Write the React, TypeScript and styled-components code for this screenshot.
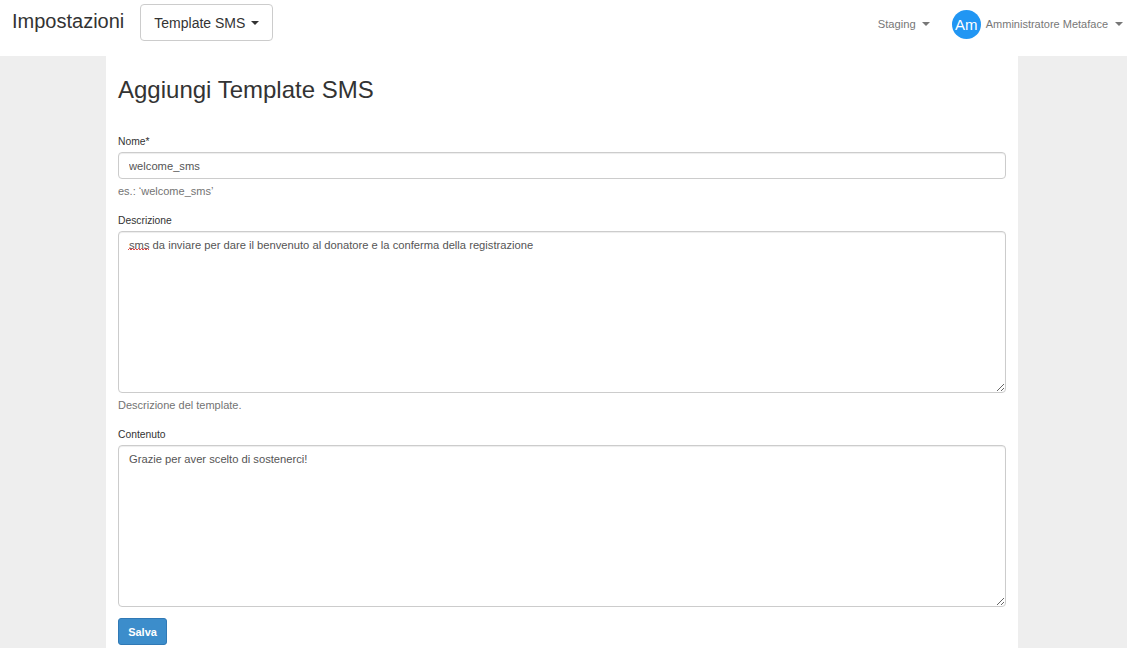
import React from "react";
import styled, { createGlobalStyle } from "styled-components";

const Global = createGlobalStyle`
  html, body { margin: 0; padding: 0; background: #eeeeee; }
  body { font-family: "Liberation Sans", Arial, sans-serif; color: #333; }
  * { box-sizing: border-box; }
`;

const Header = styled.header`
  height: 56px;
  background: #fff;
  display: flex;
  align-items: flex-start;
  justify-content: space-between;
`;

const Left = styled.div`
  display: flex;
  align-items: flex-start;
`;

const Brand = styled.div`
  font-size: 20px;
  color: #333;
  padding: 9px 16px 0 12px;
  line-height: 24px;
`;

const DropButton = styled.button`
  margin-top: 4px;
  height: 37px;
  padding: 0 13px;
  background: #fff;
  border: 1px solid #ccc;
  border-radius: 4px;
  font-family: inherit;
  font-size: 14px;
  color: #333;
  display: flex;
  align-items: center;
  gap: 4px;
`;

const Caret = styled.span<{ $color?: string }>`
  display: inline-block;
  width: 0;
  height: 0;
  border-top: 4px solid ${(p) => p.$color || "#333"};
  border-left: 4px solid transparent;
  border-right: 4px solid transparent;
  margin-left: 2px;
`;

const Right = styled.div`
  display: flex;
  align-items: center;
  height: 48px;
  padding-right: 4px;
`;

const NavItem = styled.div`
  display: flex;
  align-items: center;
  gap: 4px;
  font-size: 11.2px;
  color: #777;
  margin-right: 22px;
`;

const UserItem = styled.div`
  display: flex;
  align-items: center;
  gap: 5px;
  font-size: 11px;
  color: #777;
`;

const Avatar = styled.div`
  width: 29px;
  height: 29px;
  border-radius: 50%;
  background: #2196f3;
  color: #fff;
  font-size: 15px;
  display: flex;
  align-items: center;
  justify-content: center;
`;

const Main = styled.main`
  width: 912px;
  margin-left: 106px;
  background: #fff;
  padding: 0 12px 10px;
  min-height: 592px;
`;

const Title = styled.h1`
  margin: 0;
  padding: 19px 0 0;
  font-size: 24px;
  font-weight: 400;
  line-height: 29px;
  color: #333;
  height: 79px;
`;

const Group = styled.div<{ $last?: boolean }>`
  position: relative;
  display: flex;
  flex-direction: column;
  margin-bottom: ${(p) => (p.$last ? "11px" : "16px")};
`;

const Label = styled.label`
  font-size: 10.3px;
  line-height: 13px;
  color: #333;
  margin-bottom: 4px;
`;

const Input = styled.input`
  height: 27px;
  border: 1px solid #ccc;
  border-radius: 4px;
  padding: 0 10px;
  font-family: inherit;
  font-size: 11.2px;
  color: #555;
  box-shadow: inset 0 1px 1px rgba(0, 0, 0, 0.075);
  outline: none;
`;

const TextArea = styled.textarea`
  height: 162px;
  border: 1px solid #ccc;
  border-radius: 4px;
  padding: 6px 10px;
  font-family: inherit;
  font-size: 11.2px;
  line-height: 15px;
  color: #555;
  box-shadow: inset 0 1px 1px rgba(0, 0, 0, 0.075);
  outline: none;
  resize: vertical;
`;

const Squiggle = styled.svg`
  position: absolute;
  left: 10px;
  top: 34px;
  width: 21px;
  height: 3px;
`;

const Help = styled.span`
  font-size: 11px;
  line-height: 14px;
  color: #737373;
  margin-top: 5px;
`;

const SaveButton = styled.button`
  width: 49px;
  height: 27px;
  background: #3c8dcb;
  border: 1px solid #3079b5;
  border-radius: 3px;
  color: #fff;
  font-family: inherit;
  font-weight: 700;
  font-size: 11px;
  padding: 0;
`;

export default function App() {
  return (
    <>
      <Global />
      <Header>
        <Left>
          <Brand>Impostazioni</Brand>
          <DropButton>
            Template SMS <Caret />
          </DropButton>
        </Left>
        <Right>
          <NavItem>
            Staging <Caret $color="#777" />
          </NavItem>
          <UserItem>
            <Avatar>Am</Avatar>
            Amministratore Metaface <Caret $color="#777" />
          </UserItem>
        </Right>
      </Header>
      <Main>
        <Title>Aggiungi Template SMS</Title>
        <Group>
          <Label>Nome*</Label>
          <Input defaultValue="welcome_sms" />
          <Help>es.: ‘welcome_sms’</Help>
        </Group>
        <Group>
          <Label>Descrizione</Label>
          <TextArea defaultValue="sms da inviare per dare il benvenuto al donatore e la conferma della registrazione" />
          <Squiggle viewBox="0 0 21 3">
            <path d="M0 2 L1.5 0.5 L3 2 L4.5 0.5 L6 2 L7.5 0.5 L9 2 L10.5 0.5 L12 2 L13.5 0.5 L15 2 L16.5 0.5 L18 2 L19.5 0.5 L21 2" fill="none" stroke="#e0312f" strokeWidth="0.9" />
          </Squiggle>
          <Help>Descrizione del template.</Help>
        </Group>
        <Group $last>
          <Label>Contenuto</Label>
          <TextArea defaultValue="Grazie per aver scelto di sostenerci!" />
        </Group>
        <SaveButton>Salva</SaveButton>
      </Main>
    </>
  );
}
